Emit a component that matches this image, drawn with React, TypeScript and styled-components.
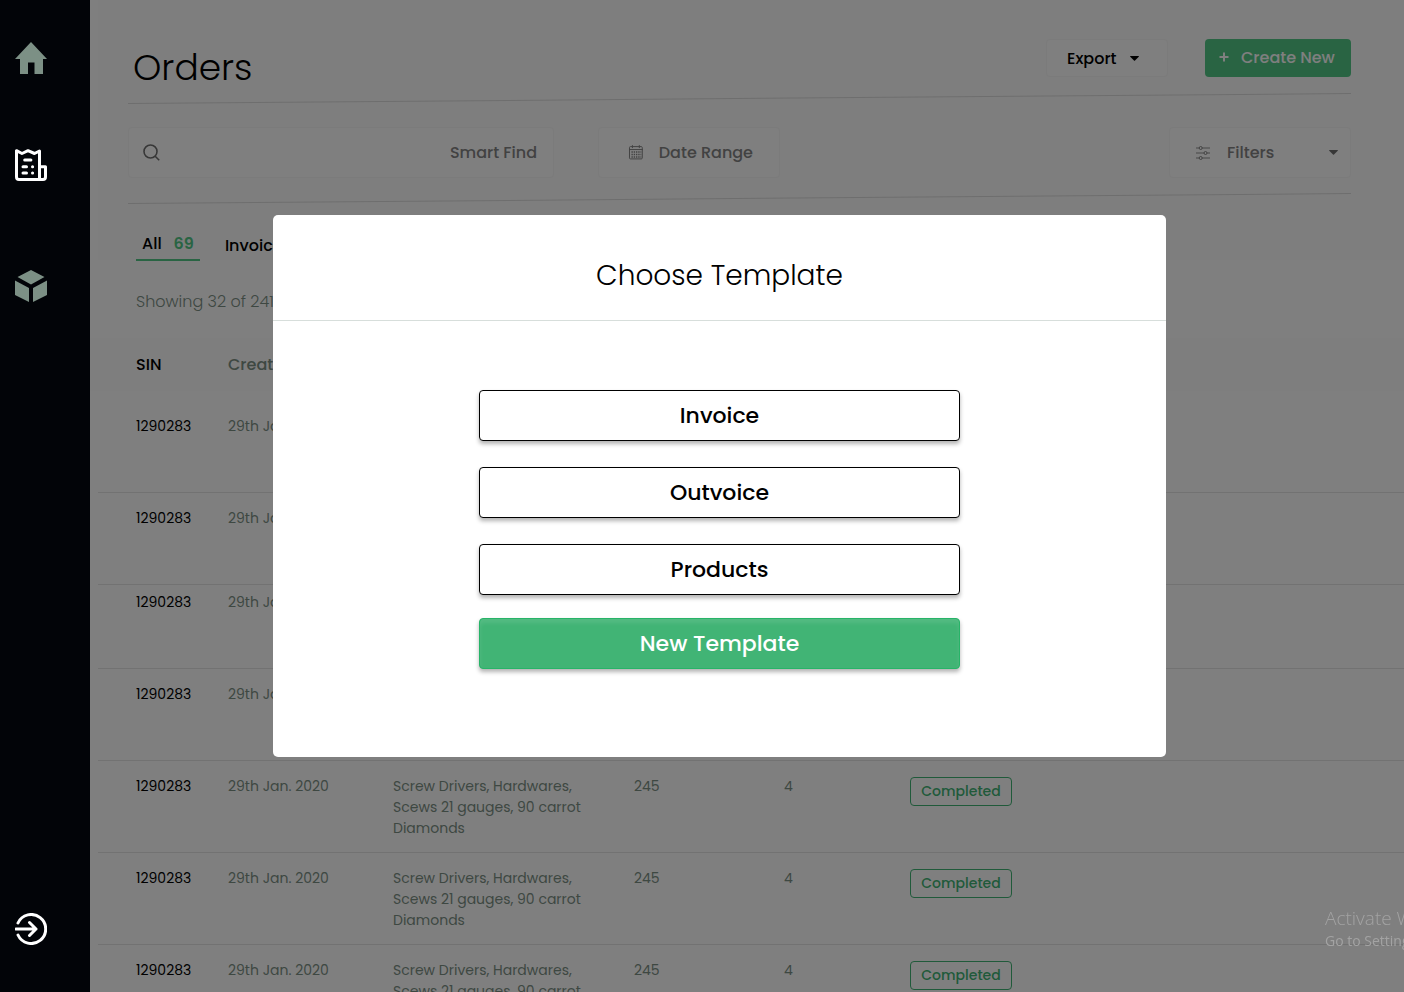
import React from "react";
import styled, { createGlobalStyle, css } from "styled-components";

const Global = createGlobalStyle`
  *, *::before, *::after { box-sizing: border-box; }
  body {
    margin: 0;
    overflow: hidden;
    background: #fff;
    color: #000;
    font-family: Poppins, Inter, "Open Sans", sans-serif;
    font-size: 16px;
  }
  button, input, select {
    font: inherit;
    color: inherit;
    margin: 0;
  }
`;

const Layout = styled.div`
  display: flex;
  height: 100vh;
  overflow: hidden;
`;

const Sidebar = styled.nav`
  position: relative;
  z-index: 3;
  flex: 0 0 90px;
  display: flex;
  flex-direction: column;
  padding: 42px 15px 47px;
  background: #020408;
`;

const NavLink = styled.a<{ $active?: boolean; $gap?: number }>`
  display: block;
  width: 32px;
  height: 32px;
  margin-top: ${(p) => (p.$gap === undefined ? "auto" : p.$gap + "px")};
  color: ${(p) => (p.$active ? "#fff" : "#7c9085")};
  svg { display: block; }
`;

const Main = styled.main`
  flex: 1;
  min-width: 0;
  padding-left: 8px;
`;

const Top = styled.div`
  height: 260px;
  padding: 0 53px 0 30px;
  background: #fcfcfc;
`;

const HeaderBar = styled.header`
  display: flex;
  align-items: flex-start;
  gap: 37px;
  padding-top: 39px;
  height: 98px;
`;

const Title = styled.h1`
  flex: 1;
  margin: 0;
  padding-left: 5px;
  font-size: 36px;
  line-height: 58px;
  font-weight: 300;
`;

const ExportButton = styled.button`
  display: flex;
  align-items: center;
  gap: 13px;
  width: 122px;
  height: 38px;
  padding: 0 0 0 20px;
  border: 1px solid #f6f6f6;
  border-radius: 4px;
  background: #fff;
  font-weight: 500;
`;

const CreateButton = styled.button`
  display: flex;
  align-items: center;
  gap: 12px;
  width: 146px;
  height: 38px;
  padding: 0 0 2px 14px;
  border: 0;
  border-radius: 4px;
  background: #53c987;
  color: #fff;
  font-weight: 500;
  white-space: nowrap;
`;

const Rule = styled.hr`
  height: 1px;
  margin: 0;
  border: 0;
  background: #dcdcdc;
  transform: rotate(-0.47deg);
`;

const FilterBar = styled.div`
  display: flex;
  gap: 44px;
  padding: 28px 0 20px;
`;

const SearchBox = styled.label`
  display: flex;
  align-items: center;
  flex: 0 1 426px;
  height: 51px;
  padding: 0 16px 0 14px;
  border: 1px solid #f6f6f6;
  border-radius: 4px;
  background: #fff;
  color: #6f6f6f;
`;

const SearchInput = styled.input`
  flex: 1;
  min-width: 0;
  padding: 0;
  border: 0;
  outline: 0;
  background: none;
  text-align: right;
  font-weight: 500;
  &::placeholder { color: #848484; opacity: 1; }
`;

const FieldButton = styled.button<{ $end?: boolean }>`
  display: flex;
  align-items: center;
  width: 182px;
  height: 51px;
  padding: 0 ${(p) => (p.$end ? 12 : 26)}px 0 ${(p) => (p.$end ? 26 : 29)}px;
  gap: ${(p) => (p.$end ? 17 : 15)}px;
  border: 1px solid #f6f6f6;
  border-radius: 4px;
  background: #fff;
  color: #848484;
  font-weight: 500;
  white-space: nowrap;
  ${(p) => p.$end && css`margin-left: auto;`}
  & > svg:nth-of-type(2) { margin-left: auto; color: #6f6f6f; }
`;

const Tabs = styled.div`
  display: flex;
  gap: 19px;
  padding: 28px 0 0 8px;
`;

const Tab = styled.button<{ $active?: boolean }>`
  display: flex;
  gap: 12px;
  height: 34px;
  padding: 0 6px;
  border: 0;
  border-bottom: 2px solid ${(p) => (p.$active ? "#53c987" : "transparent")};
  background: none;
  font-weight: 500;
  line-height: ${(p) => (p.$active ? 34 : 38)}px;
`;

const Count = styled.span`
  color: #53c987;
  font-weight: 600;
`;

const Summary = styled.p`
  margin: 0;
  padding: 30px 38px 24px;
  line-height: 24px;
  font-weight: 300;
  color: #7c9085;
`;

const OrderTable = styled.table`
  width: 100%;
  table-layout: fixed;
  border-collapse: separate;
  border-spacing: 0;
  text-align: left;
`;

const HeadCell = styled.th<{ $w?: number; $first?: boolean }>`
  width: ${(p) => (p.$w ? p.$w + "px" : "auto")};
  height: 53px;
  padding: 0 0 0 ${(p) => (p.$first ? 38 : 0)}px;
  background: #fcfcfc;
  color: ${(p) => (p.$first ? "#000" : "#7c9085")};
  font-weight: 500;
  ${(p) => p.$first && css`box-shadow: -8px 0 0 #fcfcfc;`}
`;

const Row = styled.tr<{ $pad: number }>`
  td { padding-top: ${(p) => p.$pad}px; }
`;

const Cell = styled.td<{ $first?: boolean }>`
  padding: 0 0 13px ${(p) => (p.$first ? 38 : 0)}px;
  border-bottom: 1px solid #e4e4e4;
  vertical-align: top;
  font-size: 14px;
  line-height: 21px;
  color: ${(p) => (p.$first ? "#000" : "#7c9085")};
`;

const Items = styled.div`
  width: 200px;
`;

const Badge = styled.span`
  display: flex;
  align-items: center;
  justify-content: center;
  width: 102px;
  height: 29px;
  margin-top: 1px;
  border: 1px solid #41b475;
  border-radius: 4px;
  color: #41b475;
  font-weight: 500;
`;

const Overlay = styled.div`
  position: fixed;
  inset: 0 0 0 90px;
  z-index: 2;
  display: flex;
  justify-content: center;
  align-items: flex-start;
  padding: 215px 55px 0 0;
  background: rgba(0, 0, 0, 0.5);
`;

const Dialog = styled.section`
  width: 893px;
  max-width: 100%;
  border-radius: 5px;
  background: #fff;
`;

const DialogTitle = styled.h2`
  margin: 0;
  padding: 39px 0 23px;
  border-bottom: 1px solid #d7dedb;
  font-size: 28px;
  line-height: 43px;
  font-weight: 300;
  text-align: center;
`;

const DialogBody = styled.div`
  display: flex;
  flex-direction: column;
  gap: 23px;
  width: 481px;
  max-width: 100%;
  margin: 0 auto;
  padding: 69px 0 88px;
`;

const Choices = styled.div`
  display: flex;
  flex-direction: column;
  gap: 26px;
`;

const TemplateButton = styled.button<{ $primary?: boolean }>`
  height: 51px;
  padding: 0;
  border: 1px solid ${(p) => (p.$primary ? "#27b468" : "#000")};
  border-radius: 4px;
  background: ${(p) => (p.$primary ? "#41b475" : "#fff")};
  color: ${(p) => (p.$primary ? "#fff" : "#000")};
  font-size: 22px;
  font-weight: 500;
  box-shadow: 0 3px 4px rgba(0, 0, 0, 0.3)
    ${(p) => p.$primary && ", inset 0 4px 4px rgba(255, 255, 255, 0.1)"};
`;

const Watermark = styled.aside`
  position: fixed;
  right: 0;
  bottom: 41px;
  z-index: 4;
  width: 79px;
  overflow: hidden;
  white-space: nowrap;
  font-family: "Open Sans", "Noto Sans", sans-serif;
  color: #a3a3a3;
  pointer-events: none;
`;

const WatermarkTitle = styled.div`
  font-size: 19px;
  line-height: 26px;
  font-weight: 300;
`;

const WatermarkText = styled.div`
  font-size: 14px;
  line-height: 20px;
`;

const HomeIcon = () => (
  <svg width="32" height="32" viewBox="0 0 32 32" fill="currentColor" aria-hidden="true">
    <path d="M16 0 32 17h-4v15h-8.500V20.500h-6.500V32H5V17H0z" />
  </svg>
);

const InvoiceIcon = () => (
  <svg width="32" height="32" viewBox="0 0 32 32" fill="none" stroke="currentColor" strokeWidth="3" strokeLinejoin="round" strokeLinecap="round" aria-hidden="true">
    <path d="M1.500 1.700v26.300a2.500 2.500 0 0 0 2.500 2.500h24a2.500 2.500 0 0 0 2.500-2.500V17.700h-6V2L19.500 4.500 13 1.700 7 4.500z" />
    <path d="M24.500 17.700V30" />
    <path d="M9.700 11h6.200M8 17.700h3.500M17.500 17.700h.1M8 24h3.500M17.500 24h.1" />
  </svg>
);

const BoxIcon = () => (
  <svg width="32" height="32" viewBox="0 0 32 32" fill="currentColor" aria-hidden="true">
    <path d="M16 0 29.500 7 16 14.500 2.500 7zM0 10.500 14 18v14L0 25zM32 10.500 18 18v14l14-7z" />
  </svg>
);

const ExitIcon = () => (
  <svg width="32" height="32" viewBox="0 0 32 32" fill="none" stroke="currentColor" strokeWidth="3" strokeLinecap="round" strokeLinejoin="round" aria-hidden="true">
    <path d="M3 10a14.500 14.500 0 1 1 0 12" />
    <path d="M1 16h20M14.500 9.500 21 16l-6.500 6.500" />
  </svg>
);

const SearchIcon = () => (
  <svg width="17" height="17" viewBox="0 0 17 17" fill="none" stroke="currentColor" strokeWidth="1.600" aria-hidden="true">
    <circle cx="7.500" cy="7.500" r="6.500" />
    <path d="m12.200 12.200 4 4" />
  </svg>
);

const CalendarIcon = () => (
  <svg width="16" height="16" viewBox="0 0 16 16" fill="none" stroke="currentColor" aria-hidden="true">
    <rect x="1.500" y="1.500" width="13" height="12.500" rx="1" />
    <path d="M1 4.500h14M4.500 0v3M11.500 0v3" />
    <path d="M3.500 7h10M3.500 9.500h10M3.500 12h10" strokeDasharray="1.400 .9" strokeWidth="1.400" />
  </svg>
);

const SlidersIcon = () => (
  <svg width="14" height="14" viewBox="0 0 14 14" fill="#fff" stroke="currentColor" aria-hidden="true">
    <path d="M0 2h14M0 7h14M0 12h14" strokeWidth="1.500" opacity=".6" />
    <circle cx="4.700" cy="2" r="1.500" />
    <circle cx="9.500" cy="7" r="1.500" />
    <circle cx="4.700" cy="12" r="1.500" />
  </svg>
);

const Caret = () => (
  <svg width="9" height="5" viewBox="0 0 9 5" fill="currentColor" aria-hidden="true">
    <path d="M0 .500Q0 0 .600 0h7.800Q9 0 9 .500L5 4.600q-.500.400-1 0z" />
  </svg>
);

const PlusIcon = () => (
  <svg width="10" height="10" viewBox="0 0 10 10" fill="none" stroke="currentColor" strokeWidth="2" aria-hidden="true">
    <path d="M5 .500v9M.500 5h9" />
  </svg>
);

const rowPaddings = [25, 15, 7, 15, 15, 15, 15];

export default function App() {
  return (
    <>
      <Global />
      <Layout>
        <Sidebar aria-label="Main">
          <NavLink href="#home" aria-label="Home" $gap={0}><HomeIcon /></NavLink>
          <NavLink href="#orders" aria-label="Orders" $active $gap={75}><InvoiceIcon /></NavLink>
          <NavLink href="#products" aria-label="Products" $gap={89}><BoxIcon /></NavLink>
          <NavLink href="#logout" aria-label="Log out" $active><ExitIcon /></NavLink>
        </Sidebar>
        <Main>
          <Top>
            <HeaderBar>
              <Title>Orders</Title>
              <ExportButton type="button">Export <Caret /></ExportButton>
              <CreateButton type="button"><PlusIcon /> Create New</CreateButton>
            </HeaderBar>
            <Rule />
            <FilterBar>
              <SearchBox>
                <SearchIcon />
                <SearchInput type="text" placeholder="Smart Find" aria-label="Smart Find" />
              </SearchBox>
              <FieldButton type="button"><CalendarIcon /> Date Range</FieldButton>
              <FieldButton type="button" $end><SlidersIcon /> Filters <Caret /></FieldButton>
            </FilterBar>
            <Rule />
            <Tabs>
              <Tab type="button" $active>All <Count>69</Count></Tab>
              <Tab type="button">Invoice</Tab>
            </Tabs>
          </Top>
          <Summary>Showing 32 of 241</Summary>
          <OrderTable>
            <thead>
              <tr>
                <HeadCell $w={130} $first>SIN</HeadCell>
                <HeadCell $w={165}>Created</HeadCell>
                <HeadCell $w={241}>Items</HeadCell>
                <HeadCell $w={150}>Quantity</HeadCell>
                <HeadCell $w={126}>Units</HeadCell>
                <HeadCell>Status</HeadCell>
              </tr>
            </thead>
            <tbody>
              {rowPaddings.map((pad, i) => (
                <Row key={i} $pad={pad}>
                  <Cell $first>1290283</Cell>
                  <Cell>29th Jan. 2020</Cell>
                  <Cell><Items>Screw Drivers, Hardwares, Scews 21 gauges, 90 carrot Diamonds</Items></Cell>
                  <Cell>245</Cell>
                  <Cell>4</Cell>
                  <Cell><Badge>Completed</Badge></Cell>
                </Row>
              ))}
            </tbody>
          </OrderTable>
        </Main>
      </Layout>
      <Overlay>
        <Dialog role="dialog" aria-modal="true" aria-labelledby="dialog-title">
          <DialogTitle id="dialog-title">Choose Template</DialogTitle>
          <DialogBody>
            <Choices>
              <TemplateButton type="button">Invoice</TemplateButton>
              <TemplateButton type="button">Outvoice</TemplateButton>
              <TemplateButton type="button">Products</TemplateButton>
            </Choices>
            <TemplateButton type="button" $primary>New Template</TemplateButton>
          </DialogBody>
        </Dialog>
      </Overlay>
      <Watermark>
        <WatermarkTitle>Activate Windows</WatermarkTitle>
        <WatermarkText>Go to Settings</WatermarkText>
      </Watermark>
    </>
  );
}
